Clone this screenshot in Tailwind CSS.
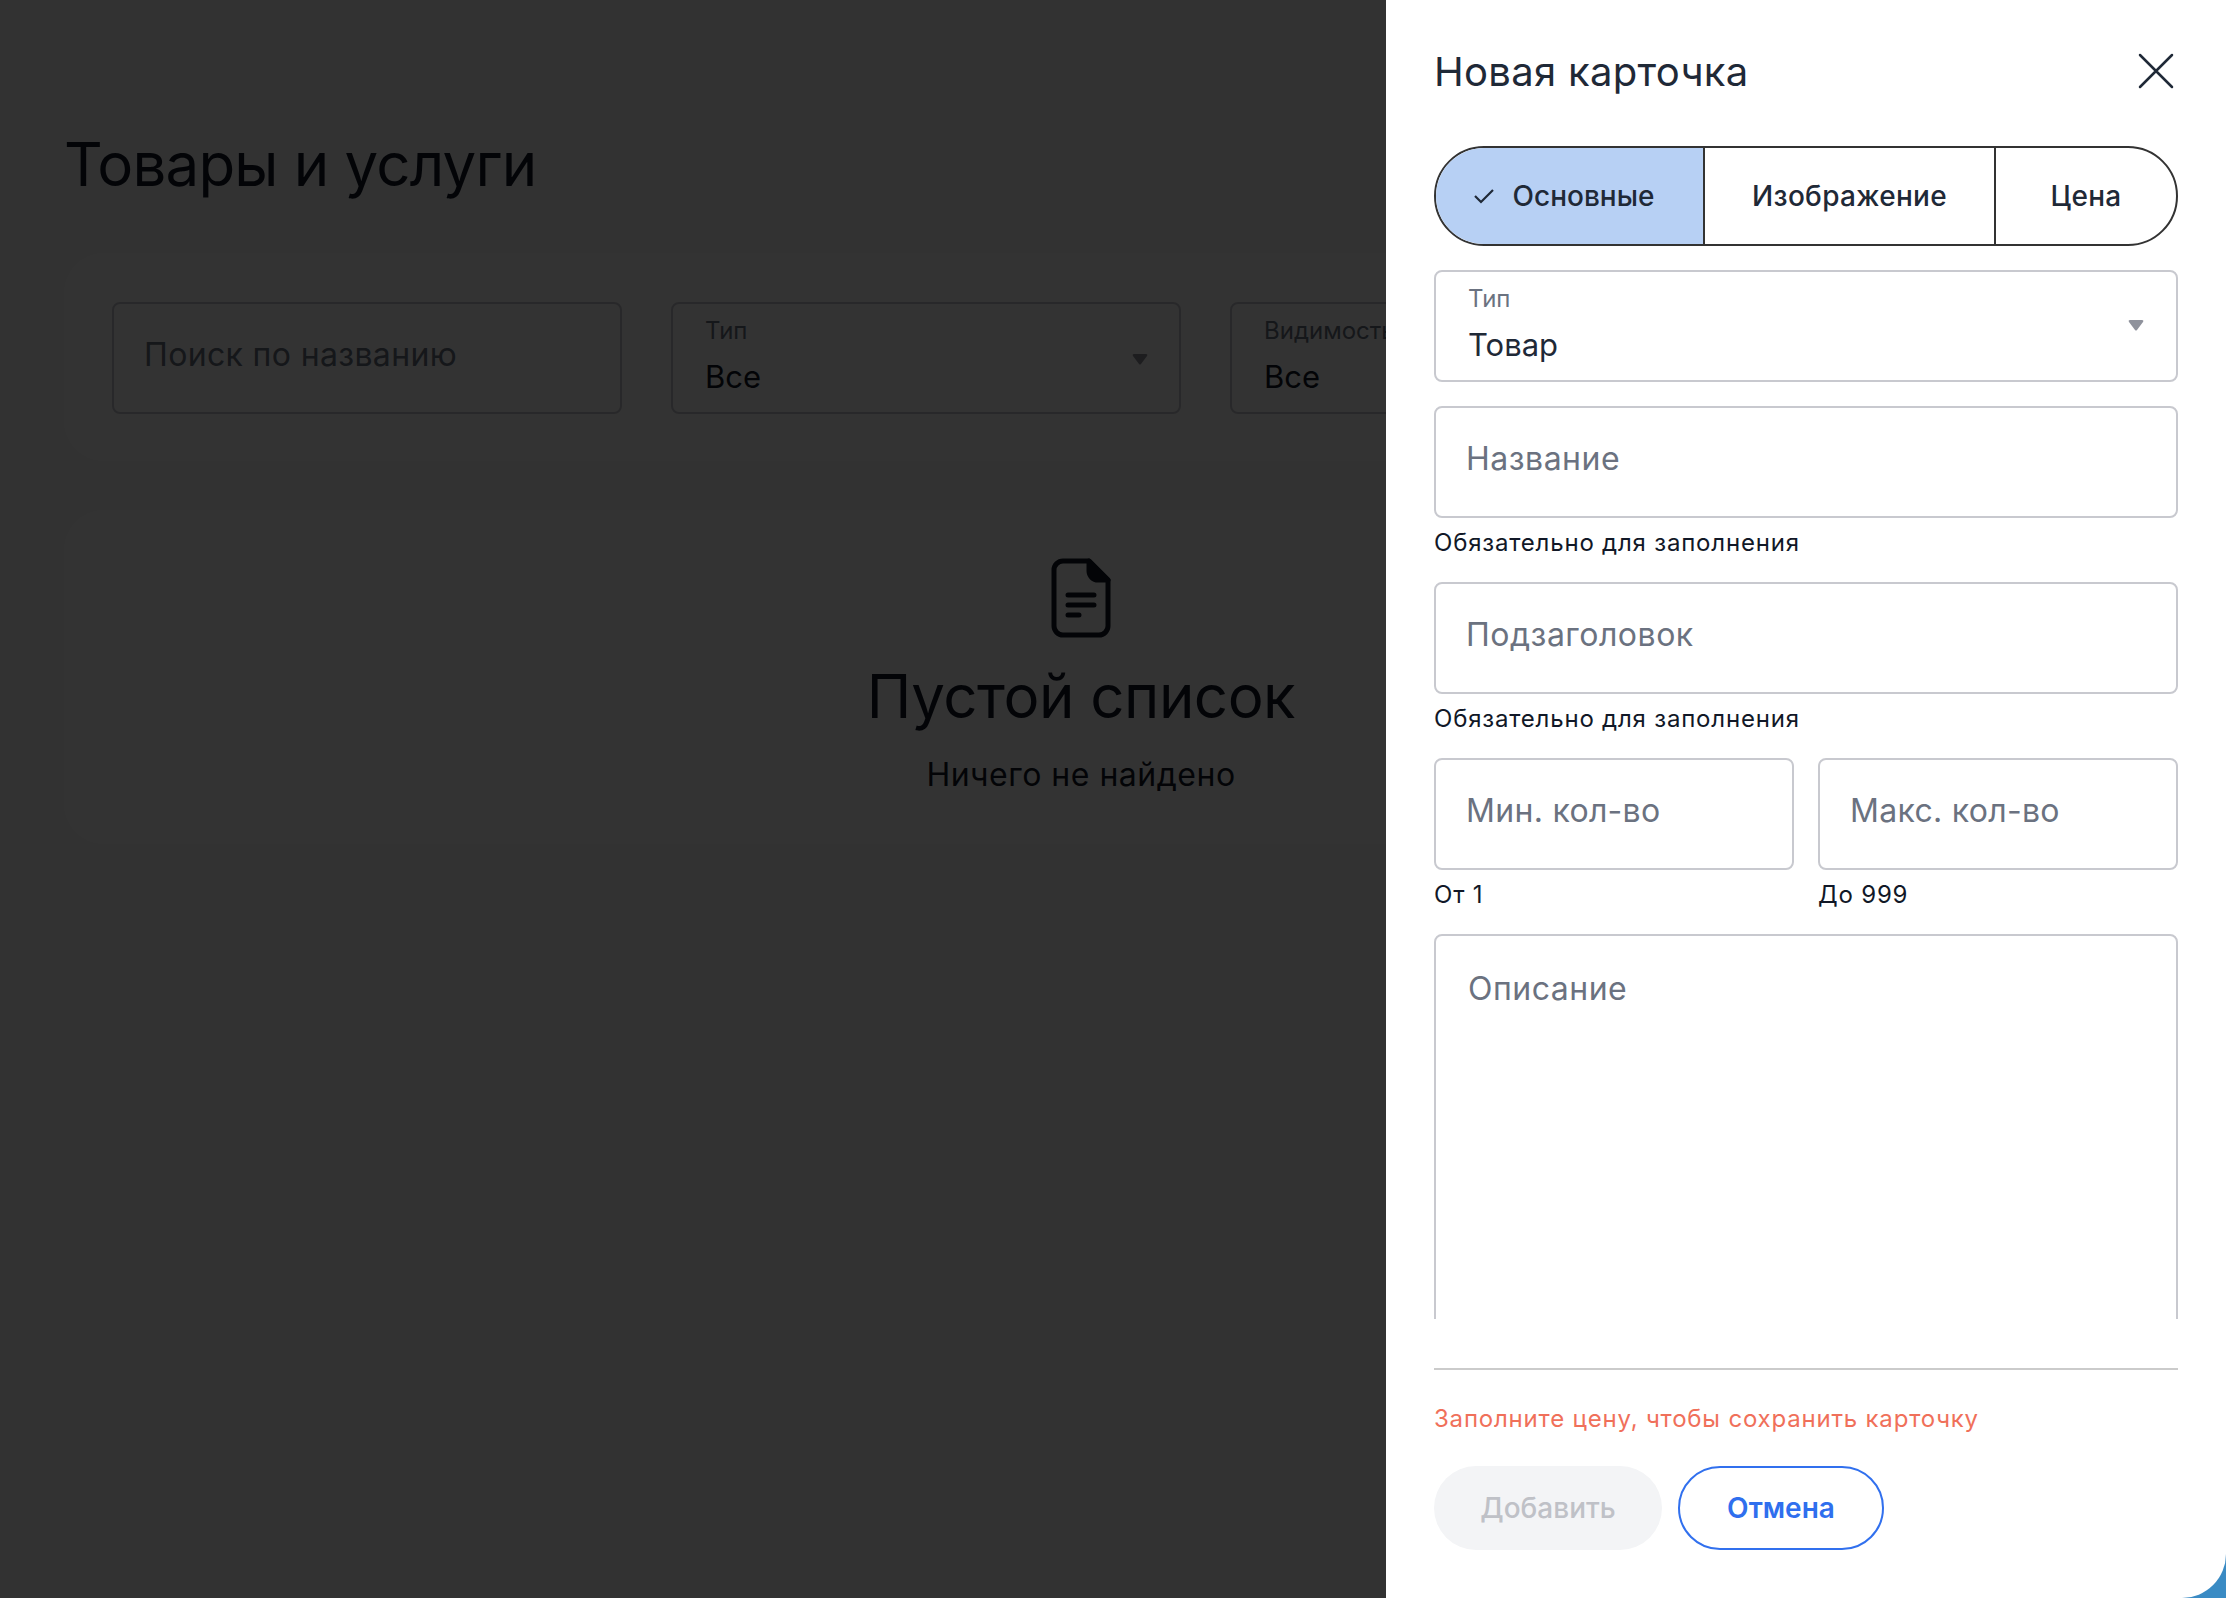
<!DOCTYPE html>
<html lang="ru">
<head>
  <meta charset="UTF-8" />
  <meta name="viewport" content="width=device-width, initial-scale=1.0" />
  <title>Товары и услуги</title>
  <script src="https://cdn.jsdelivr.net/npm/@tailwindcss/browser@4"></script>
</head>
<body class="bg-[#3a8bc4] font-['Inter','Noto_Sans',sans-serif]">
  <div class="relative w-[2226px] h-[1598px] overflow-hidden bg-[#fafafa]">

    <!-- Page behind the drawer -->
    <main class="w-[2162px] pl-16 pr-16 pt-[128px]">
      <h1 class="text-[60px] leading-[72px] text-[#111827] tracking-[-0.8px]">Товары и услуги</h1>

      <section class="mt-[53px] h-[208px] rounded-[40px] bg-white pl-12 pt-[49px] flex gap-[49px] overflow-hidden">
        <div class="w-[510px] h-[112px] shrink-0 flex items-center rounded-lg border-2 border-[#c8c9cf] px-[30px] pb-[6px]">
          <label class="text-[32px] tracking-[0.35px] text-[#6b7280]">Поиск по названию</label>
        </div>
        <div class="relative w-[510px] h-[112px] shrink-0 rounded-lg border-2 border-[#c8c9cf] px-8 pt-[13px]">
          <label class="block text-[24px] leading-[28px] text-[#6b7280]">Тип</label>
          <div class="mt-[9px] text-[31px] leading-[46px] text-[#111827]">Все</div>
          <svg class="absolute right-[31px] top-[50px] w-[16px] h-[11px]" viewBox="0 0 16 11"><path d="M2 0H14Q16 0 15 2L9 10Q8 11 7 10L1 2Q0 0 2 0Z" fill="#8f929c"/></svg>
        </div>
        <div class="relative w-[510px] h-[112px] shrink-0 rounded-lg border-2 border-[#c8c9cf] px-8 pt-[13px]">
          <label class="block text-[24px] leading-[28px] text-[#6b7280]">Видимость</label>
          <div class="mt-[9px] text-[31px] leading-[46px] text-[#111827]">Все</div>
        </div>
      </section>

      <section class="mt-[49px] h-[334px] rounded-[40px] bg-white flex flex-col items-center pt-[48px]">
        <svg class="w-[60px] h-[80px]" viewBox="0 0 60 80" fill="none" stroke="#111827" stroke-width="5" stroke-linecap="round" stroke-linejoin="round">
          <path d="M38 3H12a9 9 0 0 0-9 9V68a9 9 0 0 0 9 9H48a9 9 0 0 0 9-9V22Z"/>
          <path d="M38 3L57 22H47a9 9 0 0 1-9-9Z" fill="#111827"/>
          <path d="M17 37H43M17 47H43M17 57H28"/>
        </svg>
        <h2 class="mt-[22px] text-[60px] leading-[72px] text-[#111827] tracking-[-0.5px]">Пустой список</h2>
        <p class="mt-[25px] text-[32px] leading-[36px] tracking-[0.5px] text-[#111827]">Ничего не найдено</p>
      </section>
    </main>

    <!-- Dim layer -->
    <div class="absolute inset-0 bg-black/80"></div>

    <!-- Wallpaper peeking out behind the drawer's rounded corner -->
    <div class="absolute right-0 bottom-0 w-[60px] h-[60px] bg-[#3a8bc4]"></div>

    <!-- Drawer -->
    <aside class="absolute top-0 right-0 bottom-0 w-[840px] bg-white rounded-br-[44px] px-12 flex flex-col">
      <header class="h-[146px] flex items-start justify-between">
        <h2 class="mt-[48px] text-[40px] leading-[48px] tracking-[0.3px] text-[#1f2937]">Новая карточка</h2>
        <button class="mt-[53px] mr-[4px]">
          <svg class="w-[36px] h-[36px]" viewBox="0 0 36 36" fill="none" stroke="#1f2937" stroke-width="2.5" stroke-linecap="round"><path d="M2 2L34 34M34 2L2 34"/></svg>
        </button>
      </header>

      <div class="flex h-[100px] shrink-0 rounded-full border-2 border-[#333] overflow-hidden text-[28px] font-medium text-[#1f2937]">
        <div class="w-[269px] bg-[#b7d0f4] flex items-center justify-center gap-[19px] border-r-2 border-[#333] pr-[11px]">
          <svg class="w-[20px] h-[16px]" viewBox="0 0 20 16" fill="none" stroke="#1f2937" stroke-width="2.2"><path d="M1 8L7 14L19 2"/></svg>
          <span>Основные</span>
        </div>
        <div class="w-[291px] flex items-center justify-center border-r-2 border-[#333] tracking-[0.3px]">Изображение</div>
        <div class="flex-1 flex items-center justify-center tracking-[0.3px]">Цена</div>
      </div>

      <div class="mt-[24px] h-[1049px] shrink-0 overflow-hidden flex flex-col">
        <div class="relative h-[112px] shrink-0 rounded-lg border-2 border-[#c8c9cf] px-[32px] pt-[13px]">
          <label class="block text-[24px] leading-[28px] text-[#6b7280]">Тип</label>
          <div class="mt-[9px] text-[31px] leading-[46px] text-[#1f2937]">Товар</div>
          <svg class="absolute right-[32px] top-[48px] w-[16px] h-[11px]" viewBox="0 0 16 11"><path d="M2 0H14Q16 0 15 2L9 10Q8 11 7 10L1 2Q0 0 2 0Z" fill="#8f929c"/></svg>
        </div>

        <div class="mt-[24px] h-[112px] shrink-0 flex items-center rounded-lg border-2 border-[#c8c9cf] px-[30px] pb-[6px]">
          <label class="text-[32px] tracking-[0.5px] text-[#6b7280]">Название</label>
        </div>
        <p class="mt-[12px] text-[24px] leading-[26px] tracking-[0.8px] text-[#111827]">Обязательно для заполнения</p>

        <div class="mt-[26px] h-[112px] shrink-0 flex items-center rounded-lg border-2 border-[#c8c9cf] px-[30px] pb-[6px]">
          <label class="text-[32px] tracking-[0.5px] text-[#6b7280]">Подзаголовок</label>
        </div>
        <p class="mt-[12px] text-[24px] leading-[26px] tracking-[0.8px] text-[#111827]">Обязательно для заполнения</p>

        <div class="mt-[26px] grid grid-cols-2 gap-x-6 shrink-0">
          <div>
            <div class="h-[112px] flex items-center rounded-lg border-2 border-[#c8c9cf] px-[30px] pb-[6px]">
              <label class="text-[32px] tracking-[0.3px] text-[#6b7280]">Мин. кол-во</label>
            </div>
            <p class="mt-[12px] text-[24px] leading-[26px] tracking-[0.8px] text-[#111827]">От 1</p>
          </div>
          <div>
            <div class="h-[112px] flex items-center rounded-lg border-2 border-[#c8c9cf] px-[30px] pb-[6px]">
              <label class="text-[32px] tracking-[0.3px] text-[#6b7280]">Макс. кол-во</label>
            </div>
            <p class="mt-[12px] text-[24px] leading-[26px] tracking-[0.8px] text-[#111827]">До 999</p>
          </div>
        </div>

        <div class="mt-[26px] h-[500px] shrink-0 rounded-lg border-2 border-[#c8c9cf] px-[32px] pt-[33px]">
          <label class="text-[32px] leading-[40px] tracking-[0.5px] text-[#6b7280]">Описание</label>
        </div>
      </div>

      <footer class="mt-[49px] border-t-2 border-[#cbcbcb] pt-[35px]">
        <p class="text-[24px] leading-[28px] tracking-[0.8px] text-[#f0705a]">Заполните цену, чтобы сохранить карточку</p>
        <div class="mt-[33px] flex gap-4">
          <button class="w-[228px] h-[84px] rounded-full bg-[#f3f4f6] text-[28px] font-medium text-[#bfc1c7]">Добавить</button>
          <button class="w-[206px] h-[84px] rounded-full border-2 border-[#3170ee] text-[28px] font-semibold text-[#2f6fee]">Отмена</button>
        </div>
      </footer>
    </aside>
  </div>
</body>
</html>
